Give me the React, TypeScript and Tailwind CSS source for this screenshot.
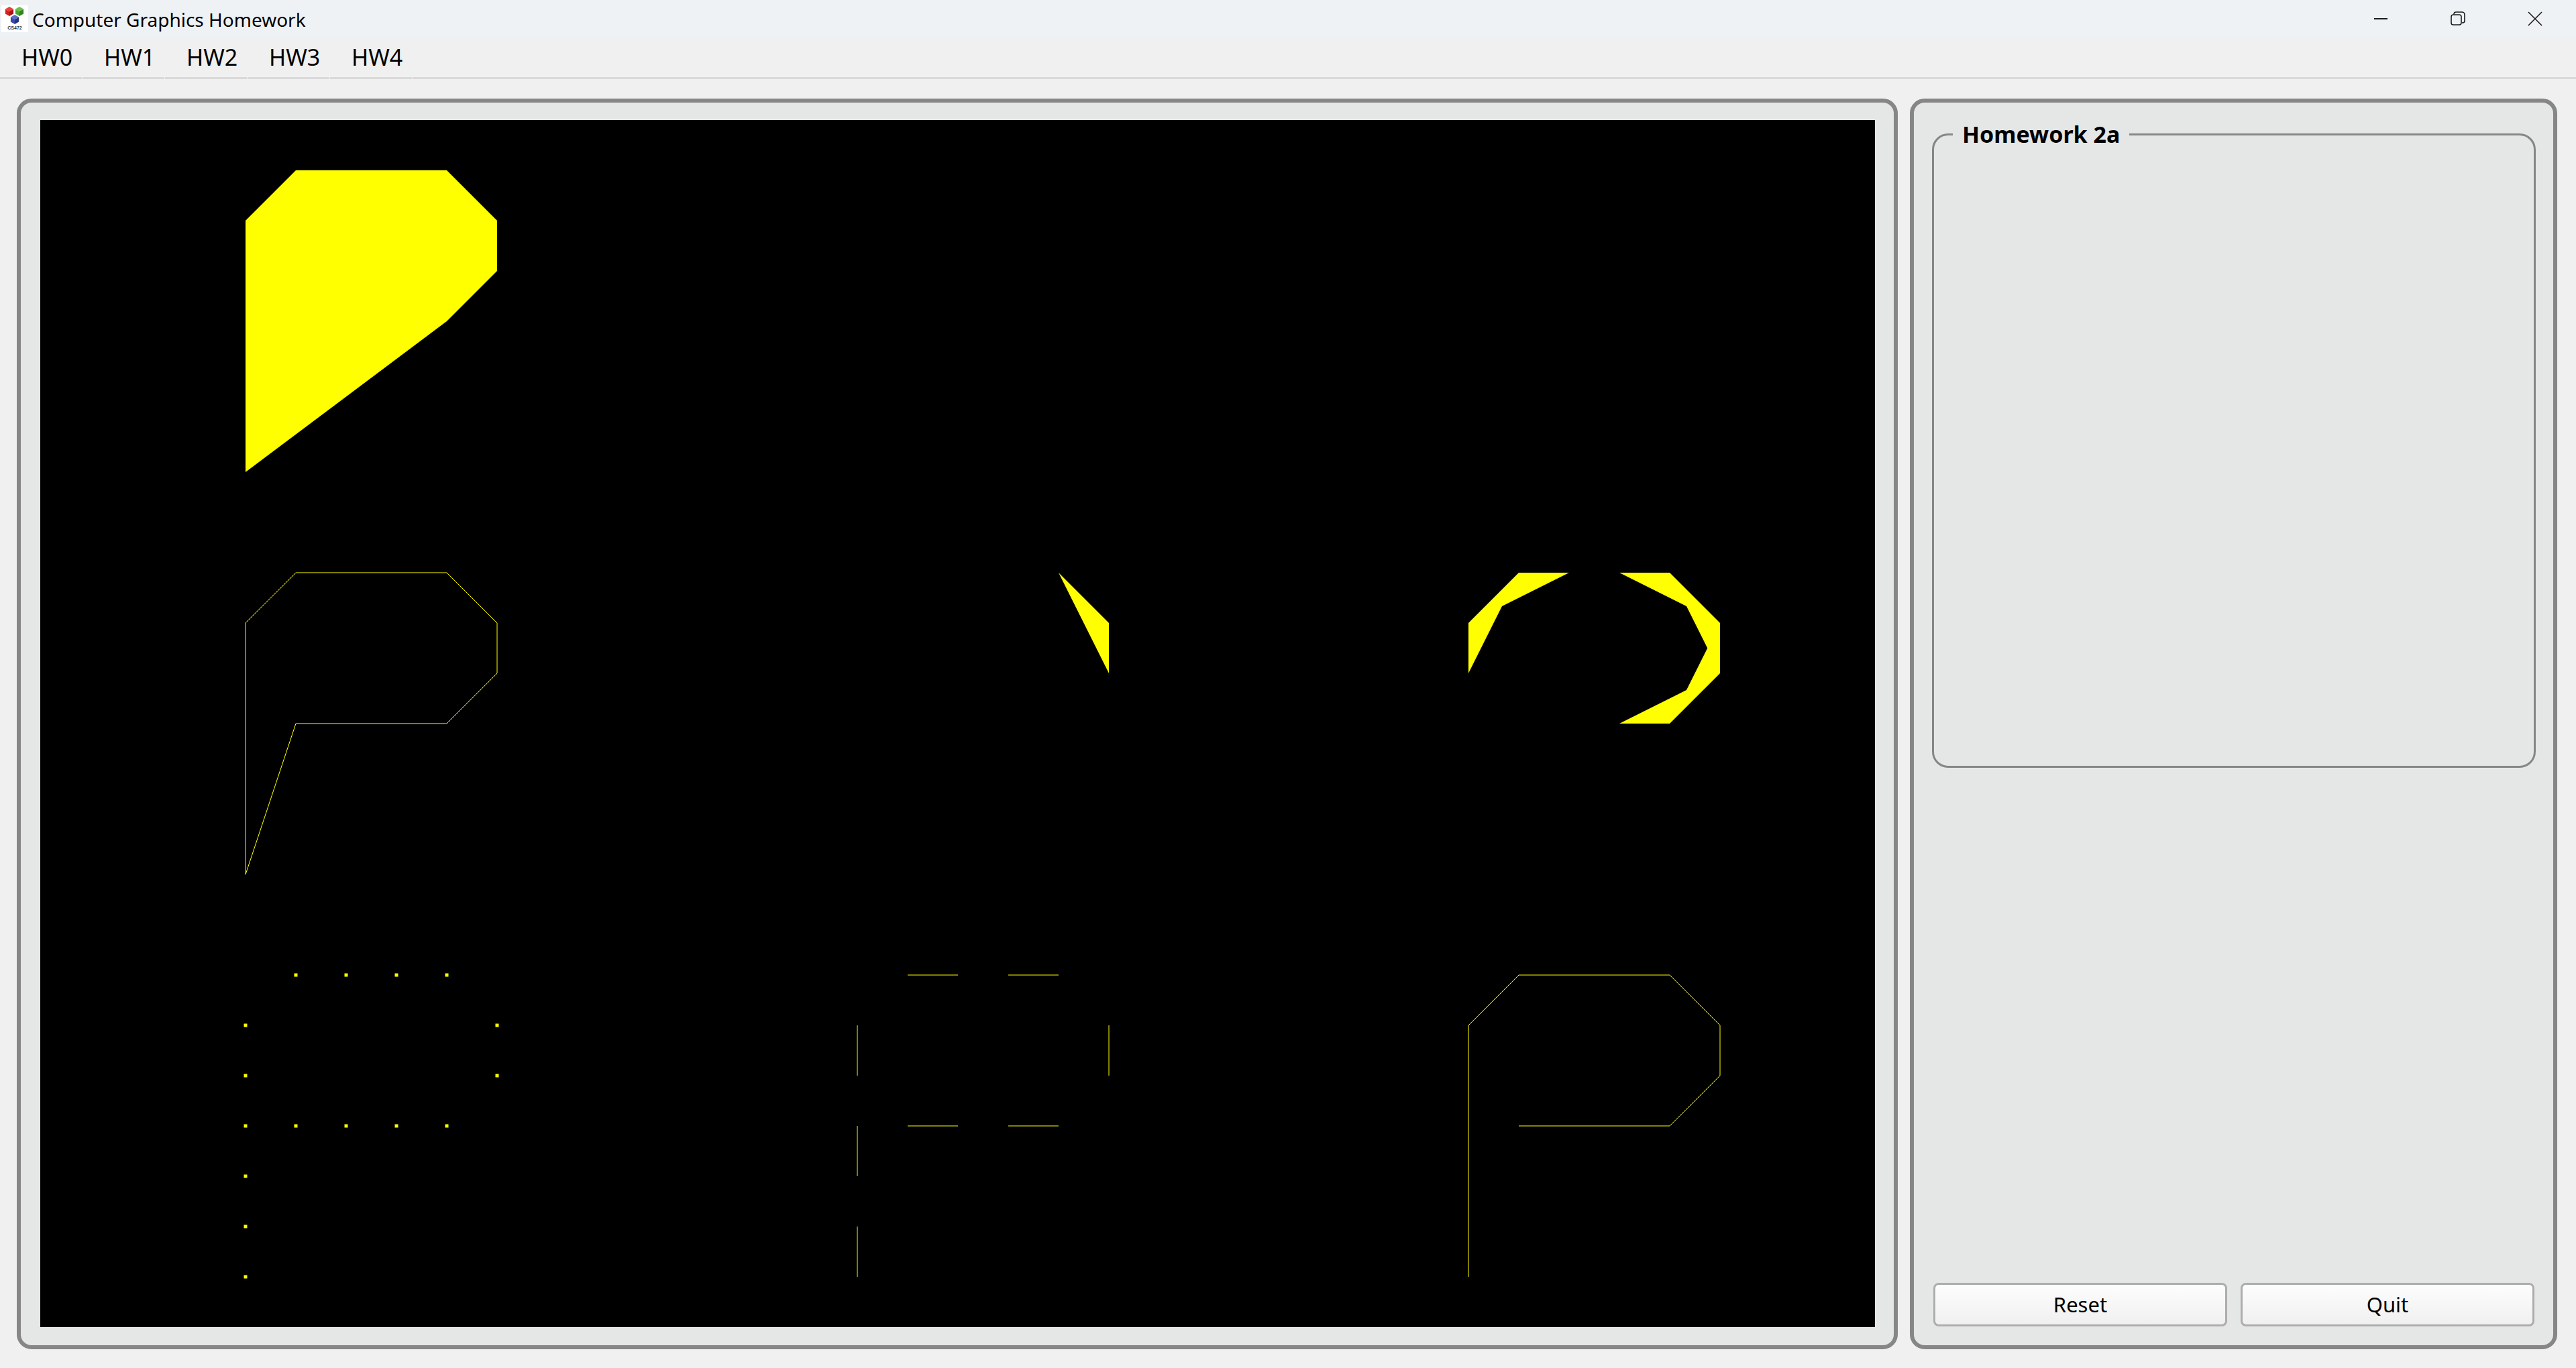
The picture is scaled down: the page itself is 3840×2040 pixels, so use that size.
import React from "react";

// unidad de la rejilla del dibujo, en px
const U = 75;
const COLS = [306, 1218, 2129];
const ROWS = [75, 675, 1275];

type Pt = [number, number];

const toPts = (c: number, r: number, pts: Pt[]) =>
  pts.map(([x, y]) => `${COLS[c] + x * U},${ROWS[r] + y * U}`).join(" ");

const pFilled: Pt[] = [[0, 1], [1, 0], [4, 0], [5, 1], [5, 2], [4, 3], [0, 6]];
const pOutline: Pt[] = [[0, 1], [1, 0], [4, 0], [5, 1], [5, 2], [4, 3], [1, 3], [0, 6]];
const clipLeft: Pt[] = [[0, 1], [1, 0], [2, 0], [2 / 3, 2 / 3], [0, 2]];
const clipRight: Pt[] = [[3, 0], [4, 0], [5, 1], [5, 2], [4, 3], [3, 3], [13 / 3, 7 / 3], [4.75, 1.5], [13 / 3, 2 / 3]];
const pOpen: Pt[] = [[0, 6], [0, 1], [1, 0], [4, 0], [5, 1], [5, 2], [4, 3], [1, 3]];

const dots: Pt[] = [
  [1, 0], [2, 0], [3, 0], [4, 0],
  [0, 1], [5, 1], [0, 2], [5, 2],
  [0, 3], [1, 3], [2, 3], [3, 3], [4, 3],
  [0, 4], [0, 5], [0, 6],
];

const dashes: [Pt, Pt][] = [
  [[0, 6], [0, 5]],
  [[0, 4], [0, 3]],
  [[0, 2], [0, 1]],
  [[1, 0], [2, 0]],
  [[3, 0], [4, 0]],
  [[5, 1], [5, 2]],
  [[4, 3], [3, 3]],
  [[2, 3], [1, 3]],
];

function Drawing() {
  return (
    <svg viewBox="0 0 2735 1800" preserveAspectRatio="none" className="block w-full h-full">
      <polygon points={toPts(0, 0, pFilled)} fill="#ffff00" />
      <polygon points={toPts(0, 1, pOutline)} fill="none" stroke="#ffff00" strokeWidth={1} />
      <polygon points={toPts(1, 1, [[4, 0], [5, 1], [5, 2]])} fill="#ffff00" />
      <polygon points={toPts(2, 1, clipLeft)} fill="#ffff00" />
      <polygon points={toPts(2, 1, clipRight)} fill="#ffff00" />
      {dots.map(([x, y], i) => (
        <rect
          key={i}
          x={COLS[0] + x * U - 2.5}
          y={ROWS[2] + y * U - 2.5}
          width={5}
          height={5}
          fill="#ffff00"
        />
      ))}
      {dashes.map(([a, b], i) => (
        <line
          key={i}
          x1={COLS[1] + a[0] * U}
          y1={ROWS[2] + a[1] * U}
          x2={COLS[1] + b[0] * U}
          y2={ROWS[2] + b[1] * U}
          stroke="#ffff00"
          strokeWidth={1}
        />
      ))}
      <polyline points={toPts(2, 2, pOpen)} fill="none" stroke="#ffff00" strokeWidth={1} />
    </svg>
  );
}

function Cube({ cx, cy, s, light, mid, dark }: { cx: number; cy: number; s: number; light: string; mid: string; dark: string }) {
  const k = s * 0.87;
  return (
    <g>
      <polygon points={`${cx},${cy - s} ${cx + k},${cy - s / 2} ${cx},${cy} ${cx - k},${cy - s / 2}`} fill={light} />
      <polygon points={`${cx - k},${cy - s / 2} ${cx},${cy} ${cx},${cy + s} ${cx - k},${cy + s / 2}`} fill={mid} />
      <polygon points={`${cx},${cy} ${cx + k},${cy - s / 2} ${cx + k},${cy + s / 2} ${cx},${cy + s}`} fill={dark} />
    </g>
  );
}

function AppIcon() {
  return (
    <svg width="40" height="40" viewBox="0 0 40 40" className="block">
      <rect width="40" height="40" fill="#ffffff" />
      <Cube cx={12} cy={9} s={7} light="#e8403a" mid="#d42020" dark="#a81414" />
      <Cube cx={27} cy={9} s={7} light="#6cc04a" mid="#48a830" dark="#2f8420" />
      <Cube cx={20} cy={21} s={7} light="#5a6cc8" mid="#3848a8" dark="#243080" />
      <text x="20" y="36" textAnchor="middle" fontSize="7" fontWeight="bold" fill="#333" fontFamily="Liberation Sans, sans-serif">
        CS472
      </text>
    </svg>
  );
}

const menus = ["HW0", "HW1", "HW2", "HW3", "HW4"];

export default function App() {
  return (
    <div className="w-[3840px] h-[2040px] flex flex-col bg-[#f0f0f0] font-['Noto_Sans',sans-serif] text-black overflow-hidden">
      {/* barra de título */}
      <div className="h-[55px] flex items-center bg-[#eff2f5]">
        <div className="ml-[2px] mt-[1px]">
          <AppIcon />
        </div>
        <span className="ml-[6px] mt-[2px] text-[28px] leading-none">Computer Graphics Homework</span>
        <div className="ml-auto flex h-full mr-[4px]">
          <div className="w-[115px] h-full flex items-center justify-center">
            <div className="w-[20px] h-[2px] bg-[#1a1a1a]" />
          </div>
          <div className="w-[115px] h-full flex items-center justify-center">
            <svg width="22" height="22" viewBox="0 0 22 22" fill="none" stroke="#1a1a1a" strokeWidth="1.6">
              <rect x="1" y="5" width="15" height="15" rx="3" />
              <path d="M5 4.5V4a3 3 0 0 1 3-3h9a4 4 0 0 1 4 4v9a3 3 0 0 1-3 3h-1" />
            </svg>
          </div>
          <div className="w-[115px] h-full flex items-center justify-center">
            <svg width="22" height="22" viewBox="0 0 22 22" stroke="#1a1a1a" strokeWidth="1.6">
              <path d="M1 1L21 21M21 1L1 21" />
            </svg>
          </div>
        </div>
      </div>

      {/* menú */}
      <div className="flex h-[63px]">
        {menus.map((m) => (
          <div key={m} className="w-[122px] mr-[1px] flex items-center pl-[32px] border-b-[3px] border-[#d9d9d9] text-[34px] leading-none">
            {m}
          </div>
        ))}
        <div className="flex-1 border-b-[3px] border-[#d9d9d9]" />
      </div>

      <main className="flex-1 flex gap-[18px] pl-[25px] pr-[28px] pt-[29px] pb-[28px] min-h-0">
        {/* panel del lienzo */}
        <div className="flex-1 flex border-[6px] border-[#868686] rounded-[22px] bg-[#e5e7e6] pl-[29px] pr-[28px] pt-[26px] pb-[27px]">
          <div className="flex-1 bg-black">
            <Drawing />
          </div>
        </div>

        {/* panel de controles */}
        <div className="w-[965px] flex flex-col border-[6px] border-[#868686] rounded-[22px] bg-[#e5e7e6] pl-[27px] pr-[26px] pt-[26px] pb-[28px]">
          <fieldset className="h-[966px] border-[3px] border-[#868686] rounded-[24px] pl-[28px] m-0 min-w-0">
            <legend className="px-[14px] text-[34px] font-bold leading-[42px]">Homework 2a</legend>
          </fieldset>
          <div className="flex-1" />
          <div className="flex gap-[20px] px-[2px]">
            <button className="flex-1 h-[65px] rounded-[8px] border-[3px] border-[#adadad] bg-linear-to-b from-[#fdfdfd] to-[#f0f0f0] text-[31px]">
              Reset
            </button>
            <button className="flex-1 h-[65px] rounded-[8px] border-[3px] border-[#adadad] bg-linear-to-b from-[#fdfdfd] to-[#f0f0f0] text-[31px]">
              Quit
            </button>
          </div>
        </div>
      </main>
    </div>
  );
}
